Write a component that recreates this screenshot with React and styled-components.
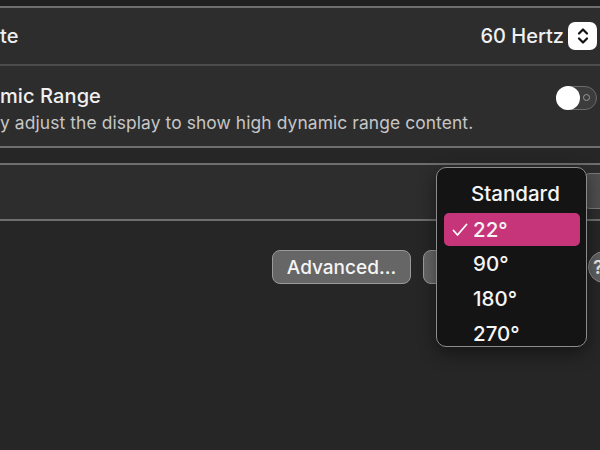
import React from "react";
import styled, { createGlobalStyle } from "styled-components";

const Global = createGlobalStyle`
  html, body { margin: 0; padding: 0; background: #262626; }
  body { font-family: Inter, "Noto Sans", "DejaVu Sans", sans-serif; -webkit-font-smoothing: antialiased; }
`;

const Page = styled.div`
  position: relative;
  width: 600px;
  height: 450px;
  overflow: hidden;
  background: #262626;
  color: #f2f2f2;
`;

const TopStrip = styled.div`
  height: 6px;
  background: #202020;
`;

const Card = styled.div`
  margin: 0 -6px 0 -10px;
  padding-left: 10px;
  background: #2d2d2d;
  border-top: 2px solid #6e6e6e;
  border-bottom: 2px solid #6e6e6e;
`;

const Row = styled.div`
  display: flex;
  align-items: center;
  justify-content: space-between;
  height: ${(p) => p.$h}px;
  padding-right: 9px;
  border-bottom: ${(p) => (p.$divider ? "2px solid #4c4c4c" : "none")};
`;

const Title = styled.div`
  font-size: 20px;
  font-weight: 500;
  color: #f0f0f0;
  letter-spacing: 0.1px;
`;

const Sub = styled.div`
  font-size: 17.4px;
  color: #c6c6c6;
  margin-top: 4px;
  letter-spacing: 0.1px;
`;

const TextCol = styled.div`
  display: flex;
  flex-direction: column;
  margin-top: 4px;
`;

const Value = styled.div`
  display: flex;
  align-items: center;
  gap: 4px;
  font-size: 20px;
  font-weight: 500;
  color: #f0f0f0;
`;

const Stepper = styled.div`
  width: 29px;
  height: 28px;
  border-radius: 7px;
  background: #ffffff;
  display: flex;
  align-items: center;
  justify-content: center;
`;

const Toggle = styled.div`
  position: relative;
  width: 41px;
  height: 24px;
  border-radius: 12px;
  background: #3c3c3c;
  border: 1px solid #6c6c6c;
  box-sizing: border-box;
  margin-top: -16px;
`;

const Knob = styled.div`
  position: absolute;
  left: -1px;
  top: -1px;
  width: 24px;
  height: 24px;
  border-radius: 50%;
  background: #ffffff;
`;

const OffMark = styled.div`
  position: absolute;
  right: 6px;
  top: 7px;
  width: 7px;
  height: 7px;
  border-radius: 50%;
  border: 1.5px solid #9a9a9a;
  box-sizing: border-box;
`;

const Gap = styled.div`
  height: ${(p) => p.$h}px;
`;

const Card2 = styled(Card)`
  height: 54px;
  display: flex;
  align-items: center;
  justify-content: flex-end;
  padding-right: 0;
`;

const HiddenButton = styled.div`
  width: 40px;
  height: 34px;
  margin-right: -18px;
  margin-top: -2px;
  border-radius: 8px;
  background: #4e4e4e;
  border: 1.5px solid #7a7a7a;
`;

const ButtonRow = styled.div`
  display: flex;
  align-items: center;
  gap: 12px;
  padding-left: 272px;
  margin-top: 29px;
`;

const Button = styled.div`
  flex: none;
  height: 34px;
  width: ${(p) => p.$w}px;
  box-sizing: border-box;
  border-radius: 8px;
  background: #666666;
  border: 1.5px solid #9a9a9a;
  color: #f5f5f5;
  font-size: 19px;
  font-weight: 500;
  display: flex;
  align-items: center;
  justify-content: center;
`;

const Help = styled.div`
  flex: none;
  width: 32px;
  height: 32px;
  margin-left: -2px;
  border-radius: 50%;
  box-sizing: border-box;
  background: #5e5e5e;
  border: 1.5px solid #8a8a8a;
  color: #e8e8e8;
  font-size: 19px;
  font-weight: 600;
  display: flex;
  align-items: center;
  justify-content: flex-start;
  padding-left: 4px;
`;

const Menu = styled.div`
  position: absolute;
  left: 436px;
  top: 167px;
  width: 151px;
  height: 180px;
  box-sizing: border-box;
  background: #141414;
  border: 1.5px solid #8c8c8c;
  border-radius: 10px;
  padding: 8px 6px 0 7px;
  box-shadow: 0 6px 18px rgba(0, 0, 0, 0.45);
`;

const Item = styled.div`
  position: relative;
  height: ${(p) => (p.$active ? 33 : 35)}px;
  border-radius: 5px;
  background: ${(p) => (p.$active ? "#c6357a" : "transparent")};
  color: #f5f5f5;
  font-size: 20.5px;
  font-weight: 500;
  display: flex;
  align-items: center;
  padding-left: ${(p) => (p.$first ? 27 : 29)}px;
  margin-bottom: ${(p) => (p.$first ? 1.5 : 0)}px;
`;

const Check = styled.svg`
  position: absolute;
  left: 8px;
  top: 10px;
`;

export default function App() {
  return (
    <Page>
      <Global />
      <TopStrip />
      <Card>
        <Row $h={56} $divider>
          <Title>te</Title>
          <Value>
            60 Hertz
            <Stepper>
              <svg width="14" height="20" viewBox="0 0 14 20" fill="none" stroke="#111" strokeWidth="2.2" strokeLinecap="round" strokeLinejoin="round">
                <path d="M3 7.5 L7 3.5 L11 7.5" />
                <path d="M3 12.5 L7 16.5 L11 12.5" />
              </svg>
            </Stepper>
          </Value>
        </Row>
        <Row $h={80}>
          <TextCol>
            <Title>mic Range</Title>
            <Sub>y adjust the display to show high dynamic range content.</Sub>
          </TextCol>
          <Toggle>
            <Knob />
            <OffMark />
          </Toggle>
        </Row>
      </Card>
      <Gap $h={15} />
      <Card2>
        <HiddenButton />
      </Card2>
      <ButtonRow>
        <Button $w={139}>Advanced...</Button>
        <Button $w={155} />
        <Help>?</Help>
      </ButtonRow>
      <Menu>
        <Item $first>Standard</Item>
        <Item $active>
          <Check width="16" height="14" viewBox="0 0 16 14" fill="none" stroke="#fff" strokeWidth="1.8" strokeLinecap="round" strokeLinejoin="round">
            <path d="M1.5 7.5 L5.5 12 L14.5 1.5" />
          </Check>
          22°
        </Item>
        <Item>90°</Item>
        <Item>180°</Item>
        <Item>270°</Item>
      </Menu>
    </Page>
  );
}
